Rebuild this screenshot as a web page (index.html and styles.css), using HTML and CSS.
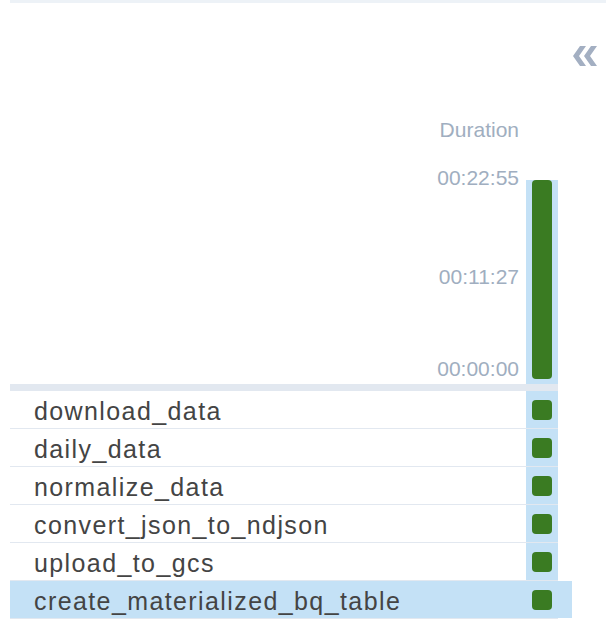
FILE: index.html
```html
<!DOCTYPE html>
<html lang="en">
<head>
<meta charset="utf-8">
<title>Grid</title>
<link rel="stylesheet" href="styles.css">
</head>
<body>
<div class="page">
  <div class="topbar"></div>
  <div class="toggle-row">
    <button class="toggle" aria-label="Collapse">
      <svg width="24" height="20" viewBox="0 0 24 20" aria-hidden="true">
        <polygon points="0,10 7,0 13,0 6,10 13,20 7,20" />
        <polygon points="11,10 18,0 24,0 17,10 24,20 18,20" />
      </svg>
    </button>
  </div>
  <div class="grid">
    <div class="header">
      <div class="axis">
        <div class="axis-title">Duration</div>
        <div class="ticks">
          <div class="tick tick-top">00:22:55</div>
          <div class="tick tick-mid">00:11:27</div>
          <div class="tick tick-bottom">00:00:00</div>
        </div>
      </div>
      <div class="run-col">
        <div class="run-bar"></div>
      </div>
    </div>
    <div class="band"></div>
    <div class="rows">
      <div class="row"><div class="row-inner"><span class="name">download_data</span><span class="cell"><span class="box"></span></span></div></div>
      <div class="row"><div class="row-inner"><span class="name">daily_data</span><span class="cell"><span class="box"></span></span></div></div>
      <div class="row"><div class="row-inner"><span class="name">normalize_data</span><span class="cell"><span class="box"></span></span></div></div>
      <div class="row"><div class="row-inner"><span class="name">convert_json_to_ndjson</span><span class="cell"><span class="box"></span></span></div></div>
      <div class="row"><div class="row-inner"><span class="name">upload_to_gcs</span><span class="cell"><span class="box"></span></span></div></div>
      <div class="row row-selected"><div class="row-inner"><span class="name">create_materialized_bq_table</span><span class="cell"><span class="box"></span></span></div></div>
    </div>
  </div>
</div>
</body>
</html>
```

FILE: styles.css
```css
* { box-sizing: border-box; }

html, body {
  margin: 0;
  padding: 0;
  background: #ffffff;
}

body {
  font-family: "Liberation Sans", Arial, sans-serif;
  color: #444444;
}

.page {
  padding-left: 10px;
}

.topbar {
  height: 3px;
  background: #edf2f7;
}

.toggle-row {
  display: flex;
  justify-content: flex-end;
  padding-top: 43px;
  padding-right: 9px;
}

.toggle {
  border: 0;
  padding: 0;
  margin: 0;
  background: none;
  display: block;
  width: 24px;
  height: 20px;
  cursor: pointer;
}

.toggle svg {
  display: block;
  fill: #a3afc2;
}

.grid {
  width: 548px;
}

.header {
  display: flex;
  align-items: flex-start;
}

.axis {
  flex: 1;
  text-align: right;
  padding-right: 7px;
  color: #a0aec0;
}

.axis-title {
  margin-top: 52px;
  font-size: 21px;
  line-height: 24px;
}

.ticks {
  display: flex;
  flex-direction: column;
  font-size: 21px;
  line-height: 24px;
}

.tick-top { margin-top: 24px; }
.tick-mid { margin-top: 75px; }
.tick-bottom { margin-top: 68px; }

.run-col {
  width: 32px;
  margin-top: 114px;
  padding: 0 6px 5px;
  background: #c4e1f6;
}

.run-bar {
  height: 199px;
  background: #3a7b22;
  border-radius: 4px;
}

.band {
  height: 7px;
  background: #e2e8f0;
}

.row {
  border-bottom: 1px solid #e2e8f0;
}

.row-inner {
  display: flex;
  align-items: stretch;
  height: 37px;
}

.name {
  flex: 1;
  display: flex;
  align-items: center;
  padding-left: 24px;
  padding-top: 3px;
  font-size: 25px;
  letter-spacing: 1.4px;
  white-space: nowrap;
}

.cell {
  width: 32px;
  display: flex;
  align-items: center;
  justify-content: center;
  background: #c4e1f6;
}

.box {
  width: 20px;
  height: 20px;
  border-radius: 4px;
  background: #3a7b22;
}

.row-selected .row-inner {
  width: calc(100% + 14px);
  background: #c4e1f6;
}

.row-selected .cell {
  width: 46px;
  padding-right: 14px;
}
```
